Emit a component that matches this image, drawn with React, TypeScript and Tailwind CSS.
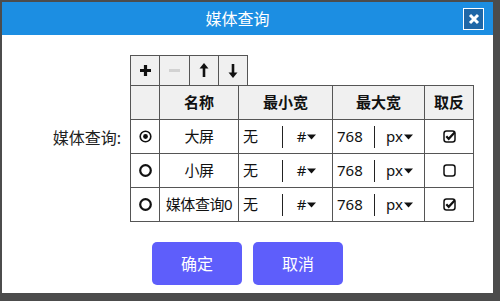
import React from "react";

const font = { fontFamily: '"Noto Sans", "Noto Sans CJK SC", sans-serif' };

const rows = [
  { name: "大屏", selected: true, invert: true },
  { name: "小屏", selected: false, invert: false },
  { name: "媒体查询0", selected: false, invert: true },
];

function Caret() {
  return (
    <svg width="9" height="6" viewBox="0 0 9 6" className="ml-[1px]">
      <path d="M0 0.5h9L4.5 5.5z" fill="#111" />
    </svg>
  );
}

function Radio({ on }: { on: boolean }) {
  return (
    <svg width="13" height="13" viewBox="0 0 13 13">
      <circle cx="6.5" cy="6.5" r="5.3" fill="none" stroke="#111" strokeWidth={on ? 1.6 : 2.2} />
      {on && <circle cx="6.5" cy="6.5" r="2.4" fill="#111" />}
    </svg>
  );
}

function Check({ on }: { on: boolean }) {
  return (
    <svg width="13" height="13" viewBox="0 0 13 13">
      <rect x="1" y="1" width="11" height="11" rx="2.5" fill="none" stroke="#111" strokeWidth="1.5" />
      {on && <path d="M3.3 6.2l2.4 2.6L11.6 2.4" fill="none" stroke="#111" strokeWidth="2.2" />}
    </svg>
  );
}

export default function App() {
  return (
    <div className="w-[500px] h-[301px] bg-[#4c4c4c] pt-[2px] pl-[2px]" style={font}>
      <div className="w-[491px] h-[291px] bg-white flex flex-col">
        {/* 标题栏 */}
        <header className="h-[33px] bg-[#1c8ee2] flex items-center">
          <div className="flex-1 text-center text-white text-[16px] pl-[10px]">媒体查询</div>
          <button className="w-[21px] h-[22px] mr-[9px] border border-white bg-[#1f67a7] flex items-center justify-center">
            <svg width="12" height="12" viewBox="0 0 12 12">
              <path d="M2 2l8 8M10 2l-8 8" stroke="#fff" strokeWidth="3" />
            </svg>
          </button>
        </header>

        <main className="flex items-center pt-[20px]">
          <div className="w-[128px] flex justify-end pr-[9px] text-[16px] text-[#222] pb-[1px]">媒体查询:</div>
          <div className="flex flex-col">
            <div className="flex h-[30px] w-[118px] border border-b-0 border-[#555] bg-[#f0f0f0]">
              <div className="flex-1 flex items-center justify-center border-r border-[#555]">
                <svg width="13" height="13" viewBox="0 0 13 13"><path d="M6.5 1v11M1 6.5h11" stroke="#111" strokeWidth="3.2" /></svg>
              </div>
              <div className="flex-1 flex items-center justify-center border-r border-[#555]">
                <svg width="13" height="13" viewBox="0 0 13 13"><path d="M1 6.5h11" stroke="#d2d2d2" strokeWidth="3" /></svg>
              </div>
              <div className="flex-1 flex items-center justify-center border-r border-[#555]">
                <svg width="10" height="15" viewBox="0 0 10 15"><path d="M5 14V3" stroke="#111" strokeWidth="2.6" /><path d="M5 0L9.5 5.5H0.5z" fill="#111" /></svg>
              </div>
              <div className="flex-1 flex items-center justify-center">
                <svg width="10" height="15" viewBox="0 0 10 15"><path d="M5 1v11" stroke="#111" strokeWidth="2.6" /><path d="M5 15L9.5 9.5H0.5z" fill="#111" /></svg>
              </div>
            </div>
            <table className="border-collapse text-[15px] text-[#111]">
              <thead>
                <tr className="h-[34px] bg-[#f0f0f0] font-bold">
                  <th className="w-[29px] border border-[#555]"></th>
                  <th className="w-[79px] border border-[#555] font-bold">名称</th>
                  <th className="w-[94px] border border-[#555] font-bold">最小宽</th>
                  <th className="w-[92px] border border-[#555] font-bold">最大宽</th>
                  <th className="w-[49px] border border-[#555] font-bold">取反</th>
                </tr>
              </thead>
              <tbody>
                {rows.map((r, i) => (
                  <tr key={i} className={i === 0 ? "h-[34px]" : "h-[33px]"}>
                    <td className="border border-[#555]">
                      <div className="flex justify-center"><Radio on={r.selected} /></div>
                    </td>
                    <td className="border border-[#555] text-center whitespace-nowrap px-0 tracking-[-0.4px]">{r.name}</td>
                    <td className="border border-[#555] p-0">
                      <div className="flex items-center h-[33px]">
                        <span className="w-[43px] pl-[4px]">无</span>
                        <span className="w-px h-[22px] bg-[#222]"></span>
                        <span className="flex-1 flex items-center justify-center pr-[2px]">#<Caret /></span>
                      </div>
                    </td>
                    <td className="border border-[#555] p-0">
                      <div className="flex items-center h-[33px]">
                        <span className="w-[41px] pl-[4px]">768</span>
                        <span className="w-px h-[22px] bg-[#222]"></span>
                        <span className="flex-1 flex items-center justify-center">px<Caret /></span>
                      </div>
                    </td>
                    <td className="border border-[#555]">
                      <div className="flex justify-center"><Check on={r.invert} /></div>
                    </td>
                  </tr>
                ))}
              </tbody>
            </table>
          </div>
        </main>

        <footer className="flex justify-center gap-[11px] pt-[20px]">
          <button className="w-[90px] h-[43px] rounded-[5px] bg-[#5e5efb] text-white text-[16px]">确定</button>
          <button className="w-[90px] h-[43px] rounded-[5px] bg-[#5e5efb] text-white text-[16px]">取消</button>
        </footer>
      </div>
    </div>
  );
}
